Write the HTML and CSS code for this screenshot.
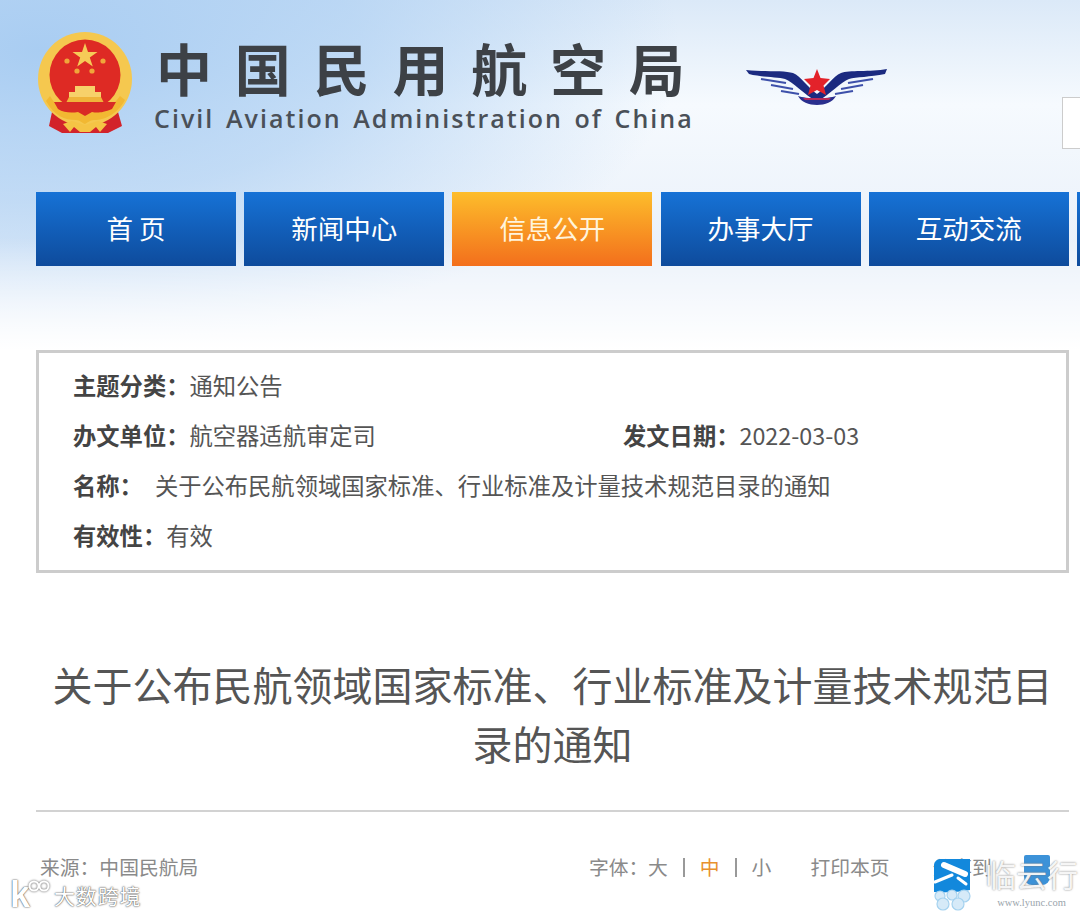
FILE: index.html
```html
<!DOCTYPE html>
<html lang="zh-CN">
<head>
  <meta charset="UTF-8">
  <meta name="viewport" content="width=device-width, initial-scale=1.0">
  <title>关于公布民航领域国家标准、行业标准及计量技术规范目录的通知</title>
  <link rel="stylesheet" href="styles.css">
</head>
<body>

  <div class="page">
    <div class="top">
      <div class="brand">
        <svg class="emblem" viewBox="36 30 100 105" aria-hidden="true">
          <path d="M52 112 L49 126 L62 133 L108 133 L122 126 L118 112 Z" fill="#d2232a"/>
          <circle cx="85" cy="79" r="47" fill="#f5c84f"/>
          <circle cx="85" cy="75" r="35.5" fill="#de2a24"/>
          <path d="M85 43 l3 9 h9.500 l-7.700 5.500 l3 9 l-7.800 -5.600 l-7.800 5.600 l3 -9 l-7.700 -5.500 h9.500 Z" fill="#f6cb57"/>
          <circle cx="67" cy="61" r="2.600" fill="#f0a63a"/>
          <circle cx="103" cy="61" r="2.600" fill="#f0a63a"/>
          <circle cx="77" cy="71" r="2.600" fill="#f0a63a"/>
          <circle cx="92" cy="71" r="2.600" fill="#f0a63a"/>
          <path d="M75 86 H95 V92 H101 V97 H69 V92 H75 Z" fill="#f7d16a"/>
          <path d="M69 97 H101 L104 103 H66 Z" fill="#efb43a"/>
          <path d="M50 96 C58 110 70 111 78 112 C84 112 85 116 85 116 C85 116 88 112 93 112 C102 111 112 108 120 96 L125 100 C115 118 100 120 94 120 C90 120 87 123 85 124 C82 123 80 120 76 120 C65 120 54 116 46 101 Z" fill="#f2b832"/>
          <path d="M54 102 H116 L112 109 C102 113 97 113 92 112 L85 116 L78 112 C72 113 64 113 58 109 Z" fill="#d92b25"/>
          <path d="M63 124 L72 121 L85 125 L98 121 L107 124 L100 132 L96 127 L90 132 H80 L74 127 L70 132 Z" fill="#f5c445"/>
        </svg>
        <div class="brand-text">
          <div class="brand-cn">中国民用航空局</div>
          <div class="brand-en">Civil Aviation Administration of China</div>
        </div>
        <svg class="wings" viewBox="746 66 142 40" aria-hidden="true">
          <path d="M746 70 C765 72 785 70 793 73 C801 76 808 88 817 94 C826 88 833 76 841 73 C849 70 870 72 887 69 L885 74 C870 77 856 77 849 79 C841 82 830 94 817 102 C804 94 793 82 785 79 C778 77 760 77 749 74 Z" fill="#1b2a80"/>
          <g stroke="#3d50aa" stroke-width="2.200" fill="none">
            <path d="M761 79 L786 83"/>
            <path d="M771 85 L793 89"/>
            <path d="M781 91 L799 94"/>
            <path d="M873 79 L848 83"/>
            <path d="M863 85 L841 89"/>
            <path d="M853 91 L835 94"/>
          </g>
          <path d="M817 69 L820.500 78 L830 79 L823.500 85.500 L826 95 L817 90 L808 95 L810.500 85.500 L804 79 L813.500 78 Z" fill="#e3222a"/>
          <path d="M798 96 C806 99 828 99 836 96 C833 102 825 105 817 105 C809 105 801 102 798 96 Z" fill="#2a2f8e"/>
          <path d="M803 98 H831 L829 100 H805 Z" fill="#b52a5a"/>
        </svg>
        <div class="search-box"></div>
      </div>

      <ul class="nav">
        <li>首 页</li>
        <li>新闻中心</li>
        <li class="active">信息公开</li>
        <li>办事大厅</li>
        <li>互动交流</li>
        <li></li>
      </ul>
    </div>

    <div class="info-box">
      <div class="info-row"><b>主题分类：</b>通知公告</div>
      <div class="info-row">
        <div class="info-col"><b>办文单位：</b>航空器适航审定司</div>
        <div><b>发文日期：</b>2022-03-03</div>
      </div>
      <div class="info-row"><b class="name-label">名称：</b>关于公布民航领域国家标准、行业标准及计量技术规范目录的通知</div>
      <div class="info-row"><b>有效性：</b>有效</div>
    </div>

    <h1 class="title">关于公布民航领域国家标准、行业标准及计量技术规范目录的通知</h1>

    <div class="meta">
      <div class="source">来源：中国民航局</div>
      <div class="tools">
        <span class="font-label">字体：</span>
        <span>大</span>
        <i class="sep"></i>
        <span class="current">中</span>
        <i class="sep"></i>
        <span>小</span>
        <span class="print">打印本页</span>
        <span class="share">分享到</span>
      </div>
    </div>

    <!-- watermarks on top of the screenshot -->
    <div class="mark-left">
      <span class="mark-k">k</span>
      <svg class="mark-rings" viewBox="0 0 22 12" aria-hidden="true">
        <circle cx="6" cy="6" r="4.500" />
        <circle cx="16" cy="6" r="4.500" />
      </svg>
      <span class="mark-name">大数跨境</span>
    </div>

    <svg class="mark-plane" viewBox="0 0 38 52" aria-hidden="true">
      <path d="M6 0 H36 V31 C26 33 10 34 0 33 V6 C0 3 3 0 6 0 Z" fill="#1288dc"/>
      <g stroke="#fff" fill="none" stroke-linecap="round">
        <path d="M10 6 L31 15" stroke-width="6"/>
        <path d="M1 23 L18 16" stroke-width="3"/>
        <path d="M24 19 L32 25" stroke-width="3"/>
      </g>
      <g fill="#d6eaf8" stroke="#a5d2ef" stroke-width="1.200">
        <circle cx="6" cy="37" r="5"/>
        <circle cx="30" cy="37" r="6"/>
        <circle cx="18" cy="36" r="5"/>
        <circle cx="9" cy="45" r="6"/>
        <circle cx="24" cy="45" r="6"/>
      </g>
    </svg>
    <div class="mark-block"></div>
    <div class="mark-right">
      <div class="mark-cn">临云行</div>
      <div class="mark-url">www.lyunc.com</div>
    </div>
  </div>

</body>
</html>
```

FILE: styles.css
```css
* {
  box-sizing: border-box;
}

body {
  margin: 0;
  padding: 0;
  background: #fff;
  font-family: "Noto Sans CJK SC", "Liberation Sans", sans-serif;
}

.page {
  position: relative;
  width: 1080px;
  height: 915px;
  overflow: hidden;
}

.top {
  height: 350px;
  overflow: hidden;
  background:
    linear-gradient(180deg, rgba(255, 255, 255, 0) 68%, #fff 100%),
    radial-gradient(ellipse 640px 300px at 40px 50px, #a9cdf2 0%, rgba(169, 205, 242, 0.65) 50%, rgba(169, 205, 242, 0) 100%),
    linear-gradient(180deg, #dbe9f8 0%, #f6fafe 30%, #eaf1fa 70%);
}

.brand {
  display: flex;
  align-items: flex-start;
  height: 192px;
  padding: 30px 0 0 36px;
}

.emblem {
  width: 100px;
  height: 105px;
  flex-shrink: 0;
  filter: blur(0.4px);
}

.brand-text {
  margin-left: 18px;
  flex-shrink: 0;
  width: 560px;
  margin-top: 4px;
  color: #3d4146;
}

.brand-cn {
  font-size: 56px;
  line-height: 66px;
  font-weight: 700;
  letter-spacing: 22.800px;
  padding-left: 2px;
}

.brand-en {
  font-family: "Open Sans", sans-serif;
  font-size: 25px;
  line-height: 28px;
  font-weight: 600;
  letter-spacing: 2.050px;
  word-spacing: 3px;
  margin-top: 4px;
  color: #4a5058;
  white-space: nowrap;
}

.wings {
  width: 142px;
  height: 40px;
  flex-shrink: 0;
  margin: 36px 0 0 32px;
  filter: blur(0.4px);
}

.search-box {
  width: 60px;
  height: 52px;
  flex-shrink: 0;
  margin: 67px 0 0 174px;
  border: 1px solid #ccc;
  background: #fff;
}

.nav {
  display: flex;
  gap: 8.200px;
  list-style: none;
  margin: 0;
  padding: 0 0 0 36px;
}

.nav li {
  flex: 0 0 200px;
  height: 74px;
  line-height: 71px;
  text-align: center;
  font-size: 26.500px;
  color: #fff;
  background: linear-gradient(180deg, #1672d6 0%, #0e4b9c 100%);
}

.nav li.active {
  color: #fff4dc;
  background: linear-gradient(180deg, #fdbd2b 0%, #f36f1c 100%);
}

.info-box {
  width: 1033px;
  height: 223px;
  margin-left: 36px;
  padding: 7px 34px 0;
  border: 3px solid #ccc;
  font-size: 23.300px;
  color: #555;
}

.info-row {
  display: flex;
  height: 50px;
  line-height: 50px;
}

.info-row b {
  font-weight: 700;
  color: #444;
}

.info-col {
  width: 550px;
}

.name-label {
  margin-right: 12px;
}

.title {
  width: 1033px;
  margin: 82px 0 0 36px;
  padding-bottom: 37px;
  border-bottom: 2px solid #d2d2d2;
  font-size: 40px;
  line-height: 59px;
  font-weight: 400;
  text-align: center;
  color: #555;
}

.meta {
  display: flex;
  align-items: center;
  margin-top: 41px;
  padding-left: 40px;
  font-size: 19.800px;
  line-height: 28px;
  color: #8a8a8a;
}

.source {
  width: 549px;
}

.tools {
  display: flex;
  align-items: center;
  white-space: nowrap;
}

.font-label {
  width: 59px;
}

.sep {
  width: 2px;
  height: 19px;
  margin: 0 15px;
  background: #999;
}

.current {
  color: #e8912d;
}

.print {
  margin-left: 39px;
}

.share {
  margin-left: 43px;
}

.mark-left {
  position: absolute;
  left: 10px;
  top: 878px;
  display: flex;
  align-items: center;
  height: 34px;
  color: #fff;
  text-shadow: 0 0 2px #555, 0 0 1px #555;
}

.mark-k {
  font-family: "Liberation Sans", sans-serif;
  font-size: 36px;
  line-height: 34px;
  font-weight: 700;
}

.mark-rings {
  width: 22px;
  height: 12px;
  margin: -18px 0 0 -2px;
  fill: none;
  stroke: #fff;
  stroke-width: 2;
  filter: drop-shadow(0 0 1px #555);
}

.mark-name {
  margin-left: 4px;
  font-size: 21px;
  letter-spacing: 0.800px;
}

.mark-plane {
  position: absolute;
  left: 934px;
  top: 859px;
  width: 38px;
  height: 52px;
}

.mark-block {
  position: absolute;
  left: 1024px;
  top: 855px;
  width: 26px;
  height: 30px;
  background: #3c92d8;
  border-radius: 2px 2px 8px 8px;
}

.mark-right {
  position: absolute;
  left: 983px;
  top: 855px;
  width: 97px;
  text-align: center;
  color: rgba(255, 255, 255, 0.92);
  text-shadow: 0 0 2px #777;
}

.mark-cn {
  font-size: 31px;
  line-height: 38px;
}

.mark-url {
  font-family: "Liberation Serif", serif;
  font-size: 10.500px;
  line-height: 14px;
  margin-top: 3px;
  color: #9aa4ac;
  text-shadow: none;
}
```
